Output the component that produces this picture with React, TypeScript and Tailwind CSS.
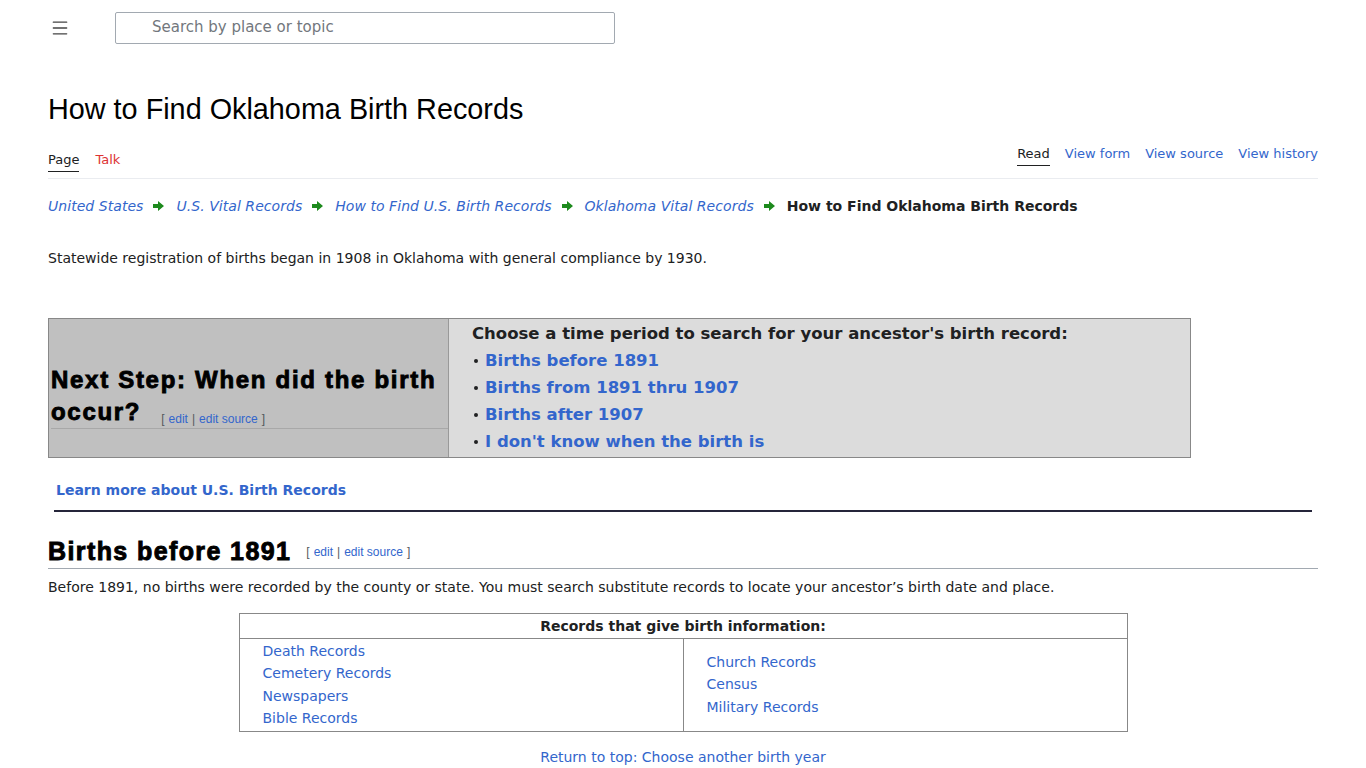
import { Menu } from "lucide-react";

const body = { fontFamily: '"DejaVu Sans", Verdana, sans-serif' };
const arial = { fontFamily: '"Liberation Sans", Arial, sans-serif' };

function Arrow() {
  return (
    <svg width="11" height="10" viewBox="0 0 11 10" className="ml-[10px] mr-[12px] inline-block">
      <polygon points="0,3 5,3 5,0 11,5 5,10 5,7 0,7" fill="#1d8a1d" />
    </svg>
  );
}

function EditLinks() {
  return (
    <span className="inline-flex gap-[4px] text-[12px] font-normal leading-[14px] tracking-normal text-[#54595d] [-webkit-text-stroke:0]" style={arial}>
      <span>[</span>
      <a className="text-[#3366cc]">edit</a>
      <span>|</span>
      <a className="text-[#3366cc]">edit source</a>
      <span>]</span>
    </span>
  );
}

const crumbs = [
  "United States",
  "U.S. Vital Records",
  "How to Find U.S. Birth Records",
  "Oklahoma Vital Records",
];

const periods = [
  "Births before 1891",
  "Births from 1891 thru 1907",
  "Births after 1907",
  "I don't know when the birth is",
];

export default function App() {
  return (
    <div className="min-h-screen bg-white text-[#202122]" style={body}>
      <header className="flex h-[56px] items-center pl-[50px]">
        <Menu className="h-5 w-5 text-[#444]" strokeWidth={1.6} />
        <div className="ml-[45px] flex h-[32px] w-[500px] items-center rounded-[2px] border border-[#a2a9b1] pb-[1px] pl-[36px] text-[15px] text-[#72777d]">
          Search by place or topic
        </div>
      </header>

      <main className="mx-[48px]">
        <h1 className="mt-[34px] text-[28.8px] leading-[38px] text-black" style={arial}>
          How to Find Oklahoma Birth Records
        </h1>

        <div className="mt-[16px] flex items-end justify-between border-b border-[#eaecf0] pb-[6px] text-[13px]">
          <div className="flex gap-[16px]">
            <span className="border-b-[1.5px] border-[#202122] pb-[1px] text-[#202122]">Page</span>
            <span className="pb-[2px] text-[#d33]">Talk</span>
          </div>
          <div className="mb-[6px] flex gap-[15px]">
            <span className="border-b-[1.5px] border-[#202122] pb-[1px]">Read</span>
            <span className="text-[#3366cc]">View form</span>
            <span className="text-[#3366cc]">View source</span>
            <span className="text-[#3366cc]">View history</span>
          </div>
        </div>

        <div className="mt-[17px] flex items-center text-[14px]">
          {crumbs.map((c) => (
            <span key={c} className="flex items-center">
              <a className="italic tracking-[0.05px] text-[#3366cc]">{c}</a>
              <Arrow />
            </span>
          ))}
          <b className="text-[#202122]">How to Find Oklahoma Birth Records</b>
        </div>

        <p className="mt-[31px] text-[14px]">
          Statewide registration of births began in 1908 in Oklahoma with general compliance by 1930.
        </p>

        <div className="mt-[49px] flex w-[1143px] border border-[#888]">
          <div className="w-[400px] border-r border-[#999] bg-[#c0c0c0] pl-[2px] pt-[45px]">
            <h2
              className="border-b border-[#a8a8a8] text-[24px] font-bold leading-[32px] tracking-[1.7px] text-black [-webkit-text-stroke:0.9px_black]"
              style={arial}
            >
              <span className="block">Next Step: When did the birth</span>
              <span className="flex h-[32px] items-center gap-[20px]">
                <span>occur?</span>
                <span className="mt-[7px]">
                  <EditLinks />
                </span>
              </span>
            </h2>
          </div>
          <div className="flex-1 bg-[#dcdcdc] px-[23px] pb-[2px] pt-[1px] text-[16.5px] font-bold leading-[27px]" style={body}>
            <div className="text-[#202122]">Choose a time period to search for your ancestor's birth record:</div>
            {periods.map((p) => (
              <div key={p} className="flex items-center">
                <span className="ml-[2px] mr-[7px] mt-[2px] h-[4px] w-[4px] rounded-full bg-[#202122]" />
                <a className="text-[#3366cc]">{p}</a>
              </div>
            ))}
          </div>
        </div>

        <div className="mx-[6px] mt-[22px] border-b-2 border-[#25253a] pb-[9px] pl-[2px] text-[14px] font-bold text-[#3366cc]">
          Learn more about U.S. Birth Records
        </div>

        <h2 className="mt-[24px] flex items-end border-b border-[#a2a9b1] pb-[2px]">
          <span
            className="text-[25px] font-bold leading-[30px] tracking-[1.4px] text-black [-webkit-text-stroke:0.9px_black]"
            style={arial}
          >
            Births before 1891
          </span>
          <span className="ml-[15px] pb-[3px]">
            <EditLinks />
          </span>
        </h2>

        <p className="mt-[8px] text-[14px]">
          Before 1891, no births were recorded by the county or state. You must search substitute records to locate your ancestor’s birth date and place.
        </p>

        <div className="mx-auto mt-[15px] w-[889px] border border-[#888] text-[14px]">
          <div className="border-b border-[#888] py-[2px] text-center font-bold leading-[20px]">
            Records that give birth information:
          </div>
          <div className="flex">
            <div className="flex w-[444px] flex-col border-r border-[#888] py-[1px] pl-[23px] leading-[22.5px] text-[#3366cc]">
              <span>Death Records</span>
              <span>Cemetery Records</span>
              <span>Newspapers</span>
              <span>Bible Records</span>
            </div>
            <div className="flex flex-1 flex-col justify-center pl-[23px] leading-[22.5px] text-[#3366cc]">
              <span>Church Records</span>
              <span>Census</span>
              <span>Military Records</span>
            </div>
          </div>
        </div>

        <p className="mt-[15px] text-center text-[14px] text-[#3366cc]">Return to top: Choose another birth year</p>
      </main>
    </div>
  );
}
